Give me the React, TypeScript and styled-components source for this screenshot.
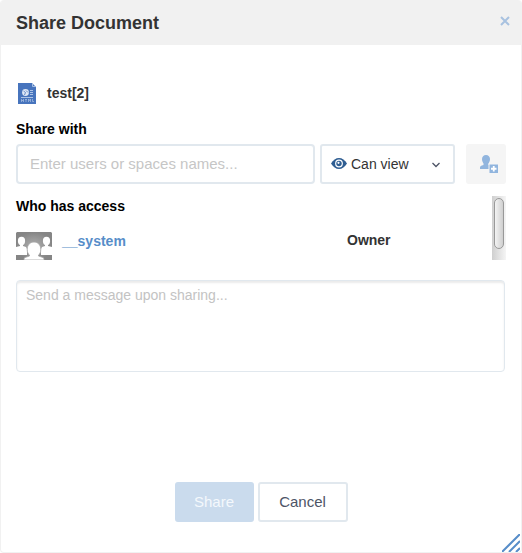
import React from "react";
import styled, { createGlobalStyle } from "styled-components";

const GlobalStyle = createGlobalStyle`
  *, *::before, *::after { box-sizing: border-box; }
  body {
    margin: 0;
    background: #fff;
    color: #333;
    font: 14px/20px "Liberation Sans", Arial, sans-serif;
  }
  button, input, select, textarea { font-family: inherit; margin: 0; }
`;

const Dialog = styled.section`
  position: relative;
  display: flex;
  flex-direction: column;
  min-height: 100vh;
  border: 1px solid #f1f1f1;
  border-top: 0;
  border-radius: 4px;
  overflow: hidden;
  background: #fff;
`;

const Header = styled.header`
  display: flex;
  align-items: center;
  justify-content: space-between;
  height: 45px;
  padding: 0 10px 0 15px;
  background: #f1f1f1;
`;

const Title = styled.h1`
  margin: 0;
  font-size: 18px;
  line-height: 24px;
`;

const CloseButton = styled.button`
  display: flex;
  padding: 2px 1px;
  margin-bottom: 4px;
  border: 0;
  background: none;
  cursor: pointer;
`;

const Content = styled.form`
  display: flex;
  flex: 1;
  flex-direction: column;
  padding: 36px 15px 30px;
`;

const DocumentRow = styled.div`
  display: flex;
  align-items: center;
  gap: 11px;
  height: 24px;
  padding-left: 2px;
  font-weight: bold;
`;

const FieldLabel = styled.label`
  display: block;
  margin: 14px 0 5px;
  color: #000;
  font-weight: bold;
`;

const ShareRow = styled.div`
  display: flex;
  height: 40px;
`;

const UserInput = styled.input`
  flex: 1;
  min-width: 0;
  padding: 0 12px 2px;
  border: 2px solid #e1e8ee;
  border-radius: 4px;
  background: #fff;
  font-size: 15px;
  color: #333;
  &::placeholder { color: #c6c6c6; opacity: 1; }
`;

const PermissionField = styled.div`
  position: relative;
  width: 135px;
  margin: 0 11px 0 5px;
`;

const PermissionSelect = styled.select`
  width: 100%;
  height: 100%;
  padding: 0 20px 0 29px;
  border: 2px solid #e1e8ee;
  border-radius: 3px;
  appearance: none;
  background: #fff;
  color: #333;
  font-size: 14px;
`;

const SelectIcon = styled.svg<{ $side: "left" | "right" }>`
  position: absolute;
  top: 0;
  bottom: 0;
  ${({ $side }) => $side}: ${({ $side }) => ($side === "left" ? "11px" : "14px")};
  height: 100%;
  pointer-events: none;
`;

const AddButton = styled.button`
  display: flex;
  align-items: center;
  justify-content: center;
  width: 40px;
  padding: 0 0 0 6px;
  border: 0;
  border-radius: 3px;
  background: #f5f5f5;
`;

const AccessPanel = styled.div`
  display: flex;
  height: 64px;
  margin: 12px 0 20px;
`;

const AccessList = styled.div`
  flex: 1;
`;

const AccessHeading = styled.h2`
  margin: 0;
  color: #000;
  font-size: 14px;
  line-height: 20px;
`;

const AccessRow = styled.div`
  display: grid;
  grid-template-columns: 36px 1fr 145px;
  column-gap: 10px;
  margin-top: 14px;
  height: 30px;
  font-weight: bold;
`;

const Avatar = styled.svg`
  margin-top: 2px;
`;

const UserLink = styled.a`
  color: #578dc9;
  line-height: 22px;
  text-decoration: none;
`;

const ScrollTrack = styled.div`
  width: 14px;
  padding: 2px;
  background: linear-gradient(to right, #cfcfcf, #f5f5f5);
`;

const ScrollThumb = styled.div`
  height: 51px;
  border: 1px solid #999;
  border-radius: 5px;
  background: linear-gradient(to right, #f3f3f3, #cfcfcf);
`;

const Message = styled.textarea`
  display: block;
  width: calc(100% - 1px);
  height: 92px;
  padding: 4px 9px;
  border: 1px solid #e1e8ee;
  border-radius: 4px;
  box-shadow: inset 0 2px 2px #ebebeb;
  background: #fff;
  color: #333;
  font-size: 14px;
  line-height: 20px;
  resize: none;
  &::placeholder { color: #c3c3c3; opacity: 1; }
`;

const Actions = styled.footer`
  display: flex;
  justify-content: center;
  gap: 4px;
  margin-top: auto;
`;

const ActionButton = styled.button<{ $primary?: boolean }>`
  min-width: ${({ $primary }) => ($primary ? "79px" : "90px")};
  height: 40px;
  padding: 0 16px 2px;
  border: 2px solid ${({ $primary }) => ($primary ? "#cadbed" : "#e1e8ee")};
  border-radius: 3px;
  background: ${({ $primary }) => ($primary ? "#cadbed" : "#fff")};
  color: ${({ $primary }) => ($primary ? "#f4f8fc" : "#4d5466")};
  font-size: 15px;
`;

const ResizeGrip = styled.svg`
  position: absolute;
  right: 1px;
  bottom: 0;
  cursor: nwse-resize;
`;

function HtmlFileIcon() {
  return (
    <svg width="18" height="21" viewBox="0 0 18 21" aria-hidden="true">
      <path d="M0 0h14l4 4v17H0z" fill="#4774bd" />
      <path d="M14.5 0v3.5H18" fill="none" stroke="#a9c0e3" />
      <circle cx="7.5" cy="9.5" r="3.4" fill="#dfe8f6" />
      <path d="M5.500 8l2 1.500-1 2.500M8 7.500l2 2" fill="none" stroke="#4774bd" strokeWidth=".8" />
      <path d="M12 7.5h3M12 9.5h3M12 11.5h3M3 14.5h12" stroke="#b9cceb" strokeWidth=".9" />
      <path d="M3.5 16v3M5.5 16v3M3.5 17.5h2M7 16.5h2M8 16v3M10.5 19v-3l1 1.5 1-1.5v3M14.5 16v2.5H16" fill="none" stroke="#a9c0e3" strokeWidth=".7" />
    </svg>
  );
}

function PeopleImage() {
  return (
    <Avatar width="36" height="28" viewBox="0 0 36 28" aria-hidden="true">
      <defs>
        <radialGradient id="avatarShade">
          <stop offset="0" stopColor="#b0b0b0" />
          <stop offset="1" stopColor="#858585" />
        </radialGradient>
      </defs>
      <path d="M1 0h34l1 1v27H0V1z" fill="url(#avatarShade)" />
      <g fill="#fff">
        <ellipse cx="5.5" cy="9" rx="3.6" ry="4.2" />
        <path d="M4 12h3v2l3 1 1 2v6H0v-8l4-1z" />
        <ellipse cx="30.5" cy="9" rx="3.6" ry="4.2" />
        <path d="M29 12h3v2l4 1v8H25v-6l1-2 3-1z" />
      </g>
      <path
        d="M18 10c4 0 6.800 3 6.800 7.500 0 3-1 4.500-2.300 5.500v1l4.500 1.500c1 .5 1 1.500 1 2.500H8c0-1 0-2 1-2.500l4.500-1.500v-1c-1.300-1-2.300-2.500-2.300-5.500 0-4.500 2.800-7.500 6.800-7.500z"
        fill="#fff"
        stroke="#a5a5a5"
        strokeWidth=".8"
      />
    </Avatar>
  );
}

export default function App() {
  return (
    <>
      <GlobalStyle />
      <Dialog role="dialog" aria-labelledby="dialog-title">
        <Header>
          <Title id="dialog-title">Share Document</Title>
          <CloseButton type="button" aria-label="Close">
            <svg width="10" height="10" viewBox="0 0 10 10" aria-hidden="true">
              <path d="M1 1l8 8M9 1L1 9" stroke="#a8c2e0" strokeWidth="2" />
            </svg>
          </CloseButton>
        </Header>
        <Content onSubmit={(event) => event.preventDefault()}>
          <DocumentRow>
            <HtmlFileIcon />
            <span>test[2]</span>
          </DocumentRow>
          <FieldLabel htmlFor="share-users">Share with</FieldLabel>
          <ShareRow>
            <UserInput id="share-users" placeholder="Enter users or spaces names..." />
            <PermissionField>
              <PermissionSelect aria-label="Permission" defaultValue="view">
                <option value="view">Can view</option>
                <option value="edit">Can edit</option>
              </PermissionSelect>
              <SelectIcon $side="left" width="16" viewBox="0 0 16 12" aria-hidden="true">
                <path d="M0 5.500C2 2 5 0 8 0s6 2 8 5.500C14 9 11 11 8 11S2 9 0 5.500z" fill="#2f5e92" />
                <circle cx="8" cy="5.500" r="3.900" fill="#fff" />
                <circle cx="8" cy="5.500" r="2.700" fill="#2f5e92" />
                <circle cx="7.500" cy="4.800" r="1.100" fill="#fff" />
              </SelectIcon>
              <SelectIcon $side="right" width="10" viewBox="0 0 10 4" aria-hidden="true">
                <path d="M1.500 1L5 4.500 8.500 1" fill="none" stroke="#4d5466" strokeWidth="1.300" />
              </SelectIcon>
            </PermissionField>
            <AddButton type="button" aria-label="Add user" disabled>
              <svg width="18" height="18" viewBox="0 0 18 18" aria-hidden="true">
                <path d="M6 0c2.500 0 4 1.700 4 4 0 2-.8 3.300-1.500 4.500V10H12v4H0v-1.500c0-1.300 1-1.800 3.500-2.500V8.500C2.800 7.300 2 6 2 4c0-2.300 1.500-4 4-4z" fill="#91b5de" />
                <path d="M8.500 8.500H18V18H8.500z" fill="#f5f5f5" />
                <path d="M9.500 9.500H18V18H9.500z" fill="#91b5de" />
                <path d="M13.750 11v5.500M11 13.750h5.500" stroke="#fff" strokeWidth="1.800" />
              </svg>
            </AddButton>
          </ShareRow>
          <AccessPanel>
            <AccessList>
              <AccessHeading>Who has access</AccessHeading>
              <AccessRow>
                <PeopleImage />
                <UserLink href="#system">__system</UserLink>
                <span>Owner</span>
              </AccessRow>
            </AccessList>
            <ScrollTrack>
              <ScrollThumb />
            </ScrollTrack>
          </AccessPanel>
          <Message aria-label="Message" placeholder="Send a message upon sharing..." />
          <Actions>
            <ActionButton type="submit" $primary disabled>Share</ActionButton>
            <ActionButton type="button">Cancel</ActionButton>
          </Actions>
        </Content>
        <ResizeGrip width="18" height="18" viewBox="0 0 18 18" aria-hidden="true">
          <path d="M0 18L18 0M7 18L18 7M14 18l4-4" stroke="#578dc9" strokeWidth="2" />
        </ResizeGrip>
      </Dialog>
    </>
  );
}
